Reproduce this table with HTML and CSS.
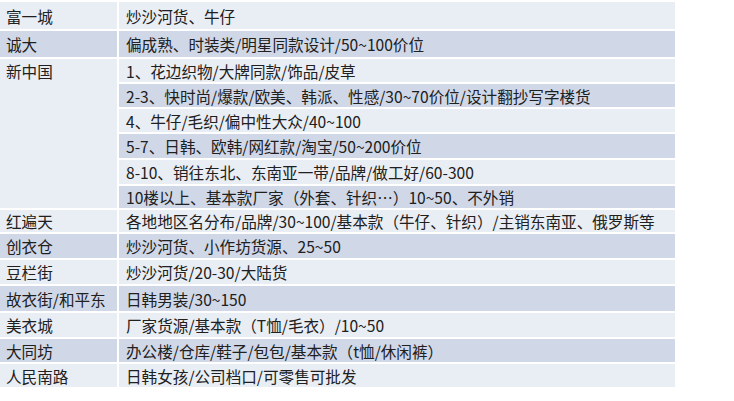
FILE: index.html
```html
<!DOCTYPE html>
<html lang="zh-CN">
<head>
<meta charset="utf-8">
<title>市场列表</title>
<link rel="stylesheet" href="styles.css">
</head>
<body>
<table class="market">
  <tbody>
    <tr class="h28 light"><th>富一城</th><td>炒沙河货、牛仔</td></tr>
    <tr class="h28 dark"><th>诚大</th><td>偏成熟、时装类/明星同款设计/50~100价位</td></tr>
    <tr class="h25 light"><th rowspan="6" class="top">新中国</th><td>1、花边织物/大牌同款/饰品/皮草</td></tr>
    <tr class="h25 dark"><td>2-3、快时尚/爆款/欧美、韩派、性感/30~70价位/设计翻抄写字楼货</td></tr>
    <tr class="h25 light"><td>4、牛仔/毛织/偏中性大众/40~100</td></tr>
    <tr class="h26 dark"><td>5-7、日韩、欧韩/网红款/淘宝/50~200价位</td></tr>
    <tr class="h26 light"><td>8-10、销往东北、东南亚一带/品牌/做工好/60-300</td></tr>
    <tr class="h24 dark"><td>10楼以上、基本款厂家（外套、针织…）10~50、不外销</td></tr>
    <tr class="h24 light"><th>红遍天</th><td>各地地区名分布/品牌/30~100/基本款（牛仔、针织）/主销东南亚、俄罗斯等</td></tr>
    <tr class="h26 dark"><th>创衣仓</th><td>炒沙河货、小作坊货源、25~50</td></tr>
    <tr class="h26 light"><th>豆栏街</th><td>炒沙河货/20-30/大陆货</td></tr>
    <tr class="h27 dark"><th>故衣街/和平东</th><td>日韩男装/30~150</td></tr>
    <tr class="h26 light"><th>美衣城</th><td>厂家货源/基本款（T恤/毛衣）/10~50</td></tr>
    <tr class="h25 dark"><th>大同坊</th><td>办公楼/仓库/鞋子/包包/基本款（t恤/休闲裤）</td></tr>
    <tr class="h25 light"><th>人民南路</th><td>日韩女孩/公司档口/可零售可批发</td></tr>
  </tbody>
</table>
</body>
</html>
```
FILE: styles.css
```css
html, body {
  margin: 0;
  padding: 0;
  background: #ffffff;
}

body {
  padding-top: 2px;
  font-family: "Noto Sans CJK SC", "Noto Sans", sans-serif;
  font-size: 15.6px;
  color: #202020;
}

.market {
  width: 675px;
  border-collapse: collapse;
  table-layout: fixed;
}

.market th,
.market td {
  font-weight: normal;
  text-align: left;
  vertical-align: middle;
  padding: 0 0 0 7px;
  border-bottom: 2px solid #ffffff;
  white-space: nowrap;
  line-height: 20px;
}

.market th {
  width: 111px;
  padding-left: 6px;
  border-right: 2px solid #ffffff;
}

.market th.top {
  vertical-align: top;
  padding-top: 2px;
  background: #e9edf4;
}

.light th,
.light td {
  background: #e9edf4;
}

.dark th,
.dark td {
  background: #d0d8e8;
}

.h24 { height: 24px; }
.h25 { height: 25px; }
.h26 { height: 26px; }
.h27 { height: 27px; }
.h28 { height: 28px; }
```
